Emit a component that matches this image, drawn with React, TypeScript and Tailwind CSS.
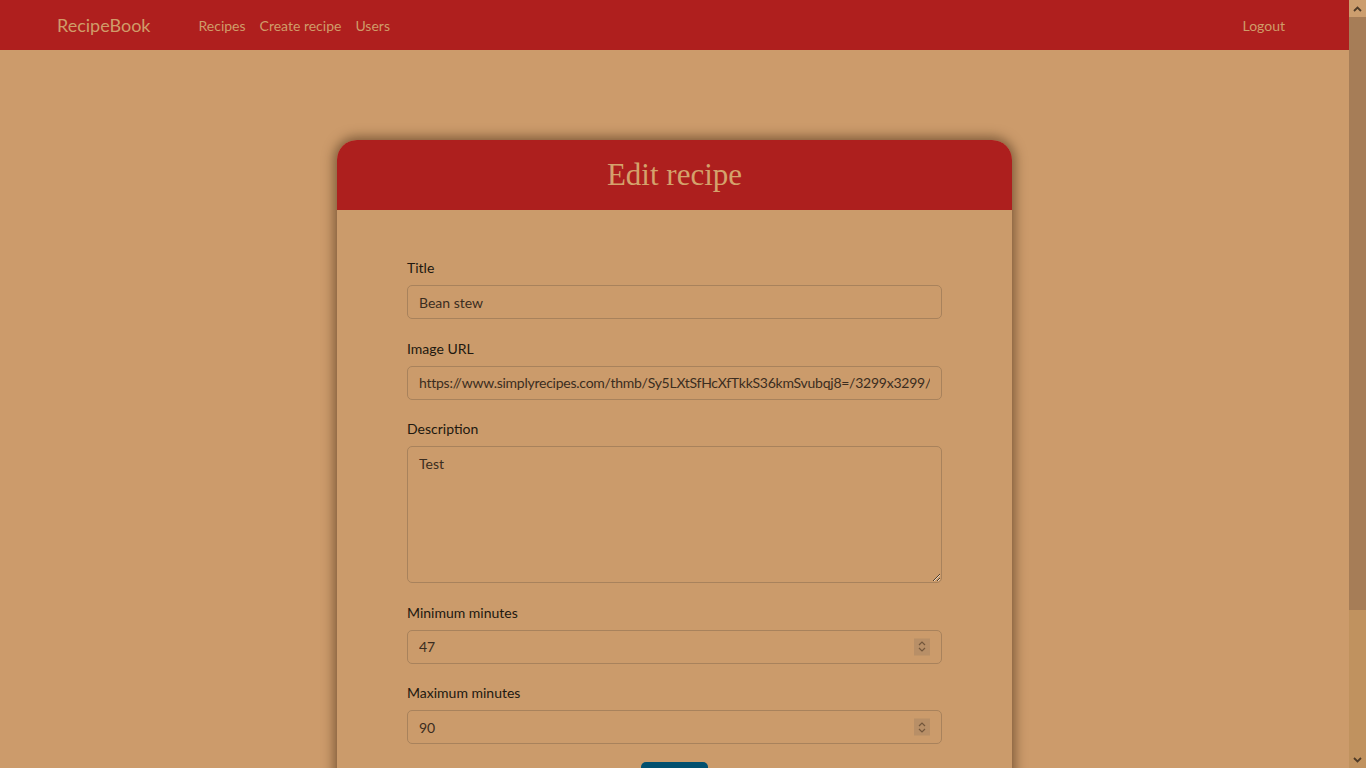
import React from "react";

const sans = "font-['Lato','Open_Sans',sans-serif]";

const imageUrl =
  "https://www.simplyrecipes.com/thmb/Sy5LXtSfHcXfTkkS36kmSvubqj8=/3299x3299/smart/filters:no_upscale()/Simply-Recipes-Bean-Stew-LEAD-3-5f5f3b1c5a5f4c7f9f2a1b2c3d4e5f60.jpg";

// small spin control drawn over number-like fields
function Spinner() {
  return (
    <span className="absolute right-[12px] top-1/2 -translate-y-1/2 w-[16px] h-[17px] bg-[#b88f67] flex items-center justify-center pointer-events-none">
      <svg width="8" height="12" viewBox="0 0 8 12" fill="none" stroke="#73563b" strokeWidth="1.2">
        <path d="M1 4.5 L4 1.5 L7 4.5" />
        <path d="M1 7.5 L4 10.5 L7 7.5" />
      </svg>
    </span>
  );
}

// window scrollbar drawn as a strip at the right edge
function ScrollStrip() {
  return (
    <div className="w-[17px] h-screen shrink-0 flex flex-col bg-[#c0925f]">
      <div className="h-[17px] bg-[#cc9e6e] flex items-center justify-center">
        <svg width="9" height="6" viewBox="0 0 9 6" fill="none" stroke="#4f3b27" strokeWidth="1.8">
          <path d="M1 5 L4.5 1.5 L8 5" />
        </svg>
      </div>
      <div className="h-[593px] bg-[#a67d57]" />
      <div className="flex-1" />
      <div className="h-[17px] flex items-center justify-center">
        <svg width="9" height="6" viewBox="0 0 9 6" fill="none" stroke="#4f3b27" strokeWidth="1.8">
          <path d="M1 1 L4.5 4.5 L8 1" />
        </svg>
      </div>
    </div>
  );
}

function Field({ label, children }: { label: string; children: React.ReactNode }) {
  return (
    <div className="flex flex-col">
      <label className="text-[14px] leading-[20px] text-[#21180f] mb-[7px]">{label}</label>
      {children}
    </div>
  );
}

const inputCls =
  "w-full h-[34px] px-[11px] rounded-[5px] border border-[#a8825c] bg-transparent text-[14px] text-[#3b2d20] outline-none " +
  sans;

export default function App() {
  return (
    <div className={`h-screen flex overflow-hidden bg-[#cc9b6b] ${sans}`}>
      <div className="flex-1 min-w-0 h-screen overflow-hidden">
        {/* Navbar */}
        <nav className="h-[50px] bg-[#af1f1e] flex items-center pl-[57px] pr-[64px]">
          <a className="text-[18px] text-[#cf9c69] mr-[41px] leading-none">RecipeBook</a>
          <div className="flex items-center text-[14px] text-[#cf9c69]">
            <a className="px-[7px]">Recipes</a>
            <a className="px-[7px]">Create recipe</a>
            <a className="px-[7px]">Users</a>
          </div>
          <a className="ml-auto text-[14px] text-[#cf9c69]">Logout</a>
        </nav>

        {/* Card */}
        <div className="flex justify-center pt-[90px] pb-[90px]">
          <div className="w-[675px] rounded-[20px] overflow-hidden bg-[#cb9b6b] shadow-[0_0_12px_3px_rgba(60,35,15,0.55)]">
            <div className="h-[70px] bg-[#ad1f1e] flex items-center justify-center">
              <h1 className="font-['Liberation_Serif','Times_New_Roman',serif] text-[31px] text-[#d4a26c] leading-none pb-[1px]">
                Edit recipe
              </h1>
            </div>

            <form className="px-[70px] pt-[48px] pb-[60px] flex flex-col gap-[19.5px]">
              <Field label="Title">
                <input className={inputCls} defaultValue="Bean stew" />
              </Field>
              <Field label="Image URL">
                <input className={`${inputCls} tracking-[-0.25px]`} defaultValue={imageUrl} />
              </Field>
              <Field label="Description">
                <textarea
                  className={`w-full h-[137px] px-[11px] py-[6px] rounded-[5px] border border-[#a8825c] bg-transparent text-[14px] leading-[21px] text-[#3b2d20] outline-none ${sans}`}
                  defaultValue="Test"
                />
              </Field>
              <Field label="Minimum minutes">
                <div className="relative">
                  <input className={inputCls} defaultValue="47" />
                  <Spinner />
                </div>
              </Field>
              <Field label="Maximum minutes">
                <div className="relative">
                  <input className={inputCls} defaultValue="90" />
                  <Spinner />
                </div>
              </Field>
              <div className="flex justify-center -mt-[2px]">
                <button
                  type="button"
                  className="w-[67px] h-[38px] rounded-[5px] bg-[#02506f] text-[14px] text-[#cb9b6b]"
                >
                  Save
                </button>
              </div>
            </form>
          </div>
        </div>
      </div>
      <ScrollStrip />
    </div>
  );
}
